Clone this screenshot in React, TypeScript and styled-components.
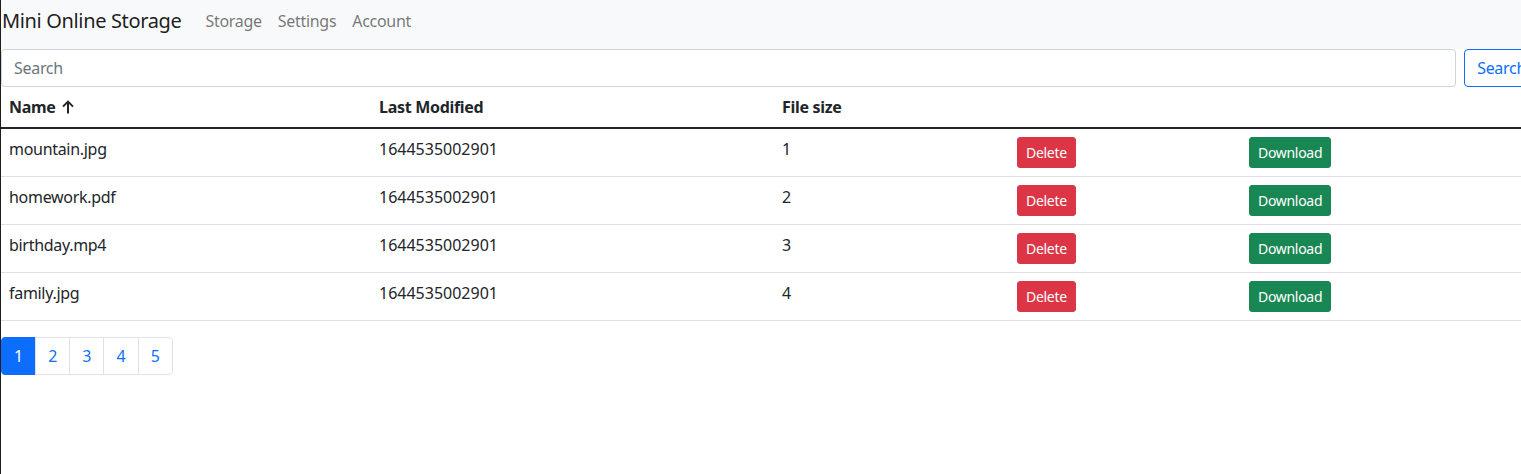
import React from "react";
import styled, { createGlobalStyle } from "styled-components";

const Global = createGlobalStyle`
  html, body { margin: 0; padding: 0; }
  body {
    background: #fff;
    border-left: 1px solid #1e1e1e;
    min-height: 474px;
    box-sizing: border-box;
    overflow: hidden;
    font-family: "Noto Sans", "Open Sans", sans-serif;
    font-size: 16px;
    line-height: 24px;
    letter-spacing: -0.3px;
    color: #212529;
  }
  * { box-sizing: border-box; }
`;

const Page = styled.div`
  width: 1538px;
`;

const Navbar = styled.nav`
  background: #f8f9fa;
  height: 49px;
  display: flex;
  align-items: flex-start;
  padding: 1px 0 0 1px;
`;

const Brand = styled.a`
  font-size: 20px;
  line-height: 40px;
  letter-spacing: -0.35px;
  color: rgba(0, 0, 0, 0.9);
  margin-right: 16px;
  text-decoration: none;
`;

const NavLink = styled.a`
  padding: 8px;
  line-height: 24px;
  color: rgba(0, 0, 0, 0.55);
  text-decoration: none;
`;

const SearchRow = styled.form`
  display: flex;
  gap: 8px;
  margin: 0;
`;

const SearchInput = styled.input`
  flex: 1;
  height: 38px;
  border: 1px solid #ced4da;
  border-radius: 4px;
  padding: 6px 12px;
  font: inherit;
  letter-spacing: inherit;
  color: #212529;
  &::placeholder { color: #6c757d; }
`;

const OutlineButton = styled.button`
  height: 38px;
  padding: 6px 12px;
  border: 1px solid #0d6efd;
  border-radius: 4px;
  background: transparent;
  color: #0d6efd;
  font: inherit;
  letter-spacing: inherit;
`;

const Table = styled.table`
  width: 100%;
  border-collapse: collapse;
  margin-bottom: 16px;
`;

const Th = styled.th<{ $w?: number }>`
  text-align: left;
  font-weight: 700;
  padding: 8px 8px 8px;
  border-bottom: 2px solid #212529;
  width: ${(p) => (p.$w ? `${p.$w}px` : "auto")};
  white-space: nowrap;
`;

const Td = styled.td<{ $num?: boolean }>`
  padding: 8px;
  vertical-align: top;
  border-bottom: 1px solid #dee2e6;
  height: 48px;
  letter-spacing: ${(p) => (p.$num ? "0" : "inherit")};
`;

const SmallButton = styled.button<{ $variant: "danger" | "success" }>`
  padding: 4px 8px;
  font: inherit;
  font-size: 14px;
  line-height: 21px;
  letter-spacing: -0.3px;
  border-radius: 3px;
  border: 1px solid ${(p) => (p.$variant === "danger" ? "#dc3545" : "#198754")};
  background: ${(p) => (p.$variant === "danger" ? "#dc3545" : "#198754")};
  color: #fff;
  display: block;
`;

const Pagination = styled.ul`
  display: flex;
  list-style: none;
  margin: 0;
  padding: 0;
  letter-spacing: 0;
`;

const PageItem = styled.li<{ $active?: boolean }>`
  padding: 6px 12px;
  line-height: 24px;
  border: 1px solid ${(p) => (p.$active ? "#0d6efd" : "#dee2e6")};
  margin-left: -1px;
  background: ${(p) => (p.$active ? "#0d6efd" : "#fff")};
  color: ${(p) => (p.$active ? "#fff" : "#0d6efd")};
  &:first-child { margin-left: 0; border-radius: 4px 0 0 4px; }
  &:last-child { border-radius: 0 4px 4px 0; }
`;

const SortArrow = () => (
  <svg width="12" height="14" viewBox="0 0 12 14" style={{ marginLeft: 6, verticalAlign: "-1px" }}>
    <path d="M6 13.5V1.8M1 6.6L6 1.6l5 5" stroke="#212529" strokeWidth="2" fill="none" />
  </svg>
);

const files = [
  { name: "mountain.jpg", size: 1 },
  { name: "homework.pdf", size: 2 },
  { name: "birthday.mp4", size: 3 },
  { name: "family.jpg", size: 4 },
];

export default function App() {
  return (
    <Page>
      <Global />
      <Navbar>
        <Brand>Mini Online Storage</Brand>
        <NavLink>Storage</NavLink>
        <NavLink>Settings</NavLink>
        <NavLink>Account</NavLink>
      </Navbar>
      <SearchRow onSubmit={(e) => e.preventDefault()}>
        <SearchInput placeholder="Search" />
        <OutlineButton type="submit">Search</OutlineButton>
      </SearchRow>
      <Table>
        <thead>
          <tr>
            <Th $w={370}>
              Name
              <SortArrow />
            </Th>
            <Th $w={403}>Last Modified</Th>
            <Th $w={235}>File size</Th>
            <Th $w={232}></Th>
            <Th></Th>
          </tr>
        </thead>
        <tbody>
          {files.map((f) => (
            <tr key={f.name}>
              <Td>{f.name}</Td>
              <Td $num>1644535002901</Td>
              <Td $num>{f.size}</Td>
              <Td>
                <SmallButton $variant="danger">Delete</SmallButton>
              </Td>
              <Td>
                <SmallButton $variant="success">Download</SmallButton>
              </Td>
            </tr>
          ))}
        </tbody>
      </Table>
      <Pagination>
        {[1, 2, 3, 4, 5].map((n) => (
          <PageItem key={n} $active={n === 1}>
            {n}
          </PageItem>
        ))}
      </Pagination>
    </Page>
  );
}
